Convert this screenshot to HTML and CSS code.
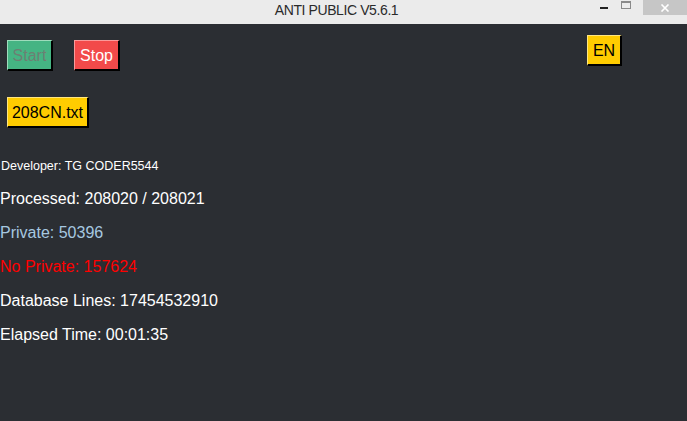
FILE: index.html
```html
<!DOCTYPE html>
<html>
<head>
<meta charset="utf-8">
<link rel="stylesheet" href="styles.css">
</head>
<body>
<div class="window">
  <div class="titlebar">
    <div class="tb-left"></div>
    <div class="tb-title">ANTI PUBLIC V5.6.1</div>
    <div class="tb-controls">
      <div class="ctl ctl-min"><span class="min-bar"></span></div>
      <div class="ctl ctl-max"><span class="max-box"></span></div>
      <div class="ctl ctl-close">
        <svg width="10" height="8" viewBox="0 0 10 8"><path d="M1.5 0.5 L8.5 7.5 M8.5 0.5 L1.5 7.5" stroke="#ffffff" stroke-width="1.6" fill="none"/></svg>
      </div>
    </div>
  </div>
  <div class="content">
    <div class="top">
      <div class="left-col">
        <div class="btn-row">
          <div class="btn btn-start">Start</div>
          <div class="btn btn-stop">Stop</div>
        </div>
        <div class="btn btn-file">208CN.txt</div>
      </div>
      <div class="btn btn-lang">EN</div>
    </div>
    <div class="stats">
      <div class="line dev">Developer: TG CODER5544</div>
      <div class="line">Processed: 208020 / 208021</div>
      <div class="line private">Private: 50396</div>
      <div class="line noprivate">No Private: 157624</div>
      <div class="line">Database Lines: 17454532910</div>
      <div class="line">Elapsed Time: 00:01:35</div>
    </div>
  </div>
</div>
</body>
</html>
```
FILE: styles.css
```css
html, body {
  margin: 0;
  padding: 0;
  width: 687px;
  height: 421px;
  overflow: hidden;
  background: #2b2e33;
}
.window {
  width: 687px;
  height: 421px;
  display: flex;
  flex-direction: column;
  font-family: "Liberation Sans", Arial, sans-serif;
}
.titlebar {
  height: 24px;
  background: #ebebeb;
  display: grid;
  grid-template-columns: 1fr auto 1fr;
  align-items: start;
}
.tb-title {
  font-family: "Liberation Sans", Arial, sans-serif;
  font-size: 14px;
  color: #2a2a2a;
  line-height: 20px;
  padding-right: 14px;
  letter-spacing: -0.4px;
}
.tb-controls {
  display: flex;
  justify-content: flex-end;
  align-items: flex-start;
}
.ctl {
  height: 15px;
  display: flex;
  justify-content: center;
}
.ctl-min {
  width: 26px;
  align-items: flex-start;
}
.min-bar {
  display: block;
  width: 8px;
  height: 2px;
  background: #222;
  margin-top: 7px;
}
.ctl-max {
  width: 18px;
}
.max-box {
  display: block;
  width: 8px;
  height: 5px;
  border: 1px solid #8a8a8a;
  border-top-width: 2px;
  margin-top: 1px;
}
.ctl-close {
  width: 44px;
  background: #c6c6c6;
  align-items: center;
  margin-left: 8px;
}
.content {
  flex: 1;
  display: flex;
  flex-direction: column;
}
.top {
  display: flex;
  justify-content: space-between;
  align-items: flex-start;
}
.left-col {
  display: flex;
  flex-direction: column;
  align-items: flex-start;
  padding-left: 7px;
  padding-top: 16px;
  gap: 26px;
}
.btn-row {
  display: flex;
  gap: 21px;
}
.btn {
  box-sizing: border-box;
  height: 31px;
  font-size: 16px;
  display: flex;
  align-items: center;
  justify-content: center;
  border-style: solid;
  border-width: 1px 2px 2px 1px;
  border-right-color: #000;
  border-bottom-color: #000;
  padding-top: 1px;
}
.btn-start {
  width: 46px;
  background: #45b483;
  color: #6d7f73;
  border-top-color: #9edcbc;
  border-left-color: #9edcbc;
}
.btn-stop {
  width: 46px;
  background: #f24a4a;
  color: #ffffff;
  border-top-color: #fa9a9a;
  border-left-color: #fa9a9a;
}
.btn-file {
  width: 82px;
  background: #ffcc00;
  color: #000;
  border-top-color: #ffe680;
  border-left-color: #ffe680;
}
.btn-lang {
  width: 35px;
  margin-top: 11px;
  margin-right: 65px;
  background: #ffcc00;
  color: #000;
  border-top-color: #ffe680;
  border-left-color: #ffe680;
}
.stats {
  margin-top: 22px;
  display: flex;
  flex-direction: column;
}
.line {
  font-size: 16px;
  line-height: 34px;
  color: #ffffff;
  white-space: nowrap;
}
.dev {
  font-size: 12.5px;
  line-height: 32px;
  padding-left: 1px;
}
.private {
  color: #a6c8e0;
}
.noprivate {
  color: #ff0000;
}
```
